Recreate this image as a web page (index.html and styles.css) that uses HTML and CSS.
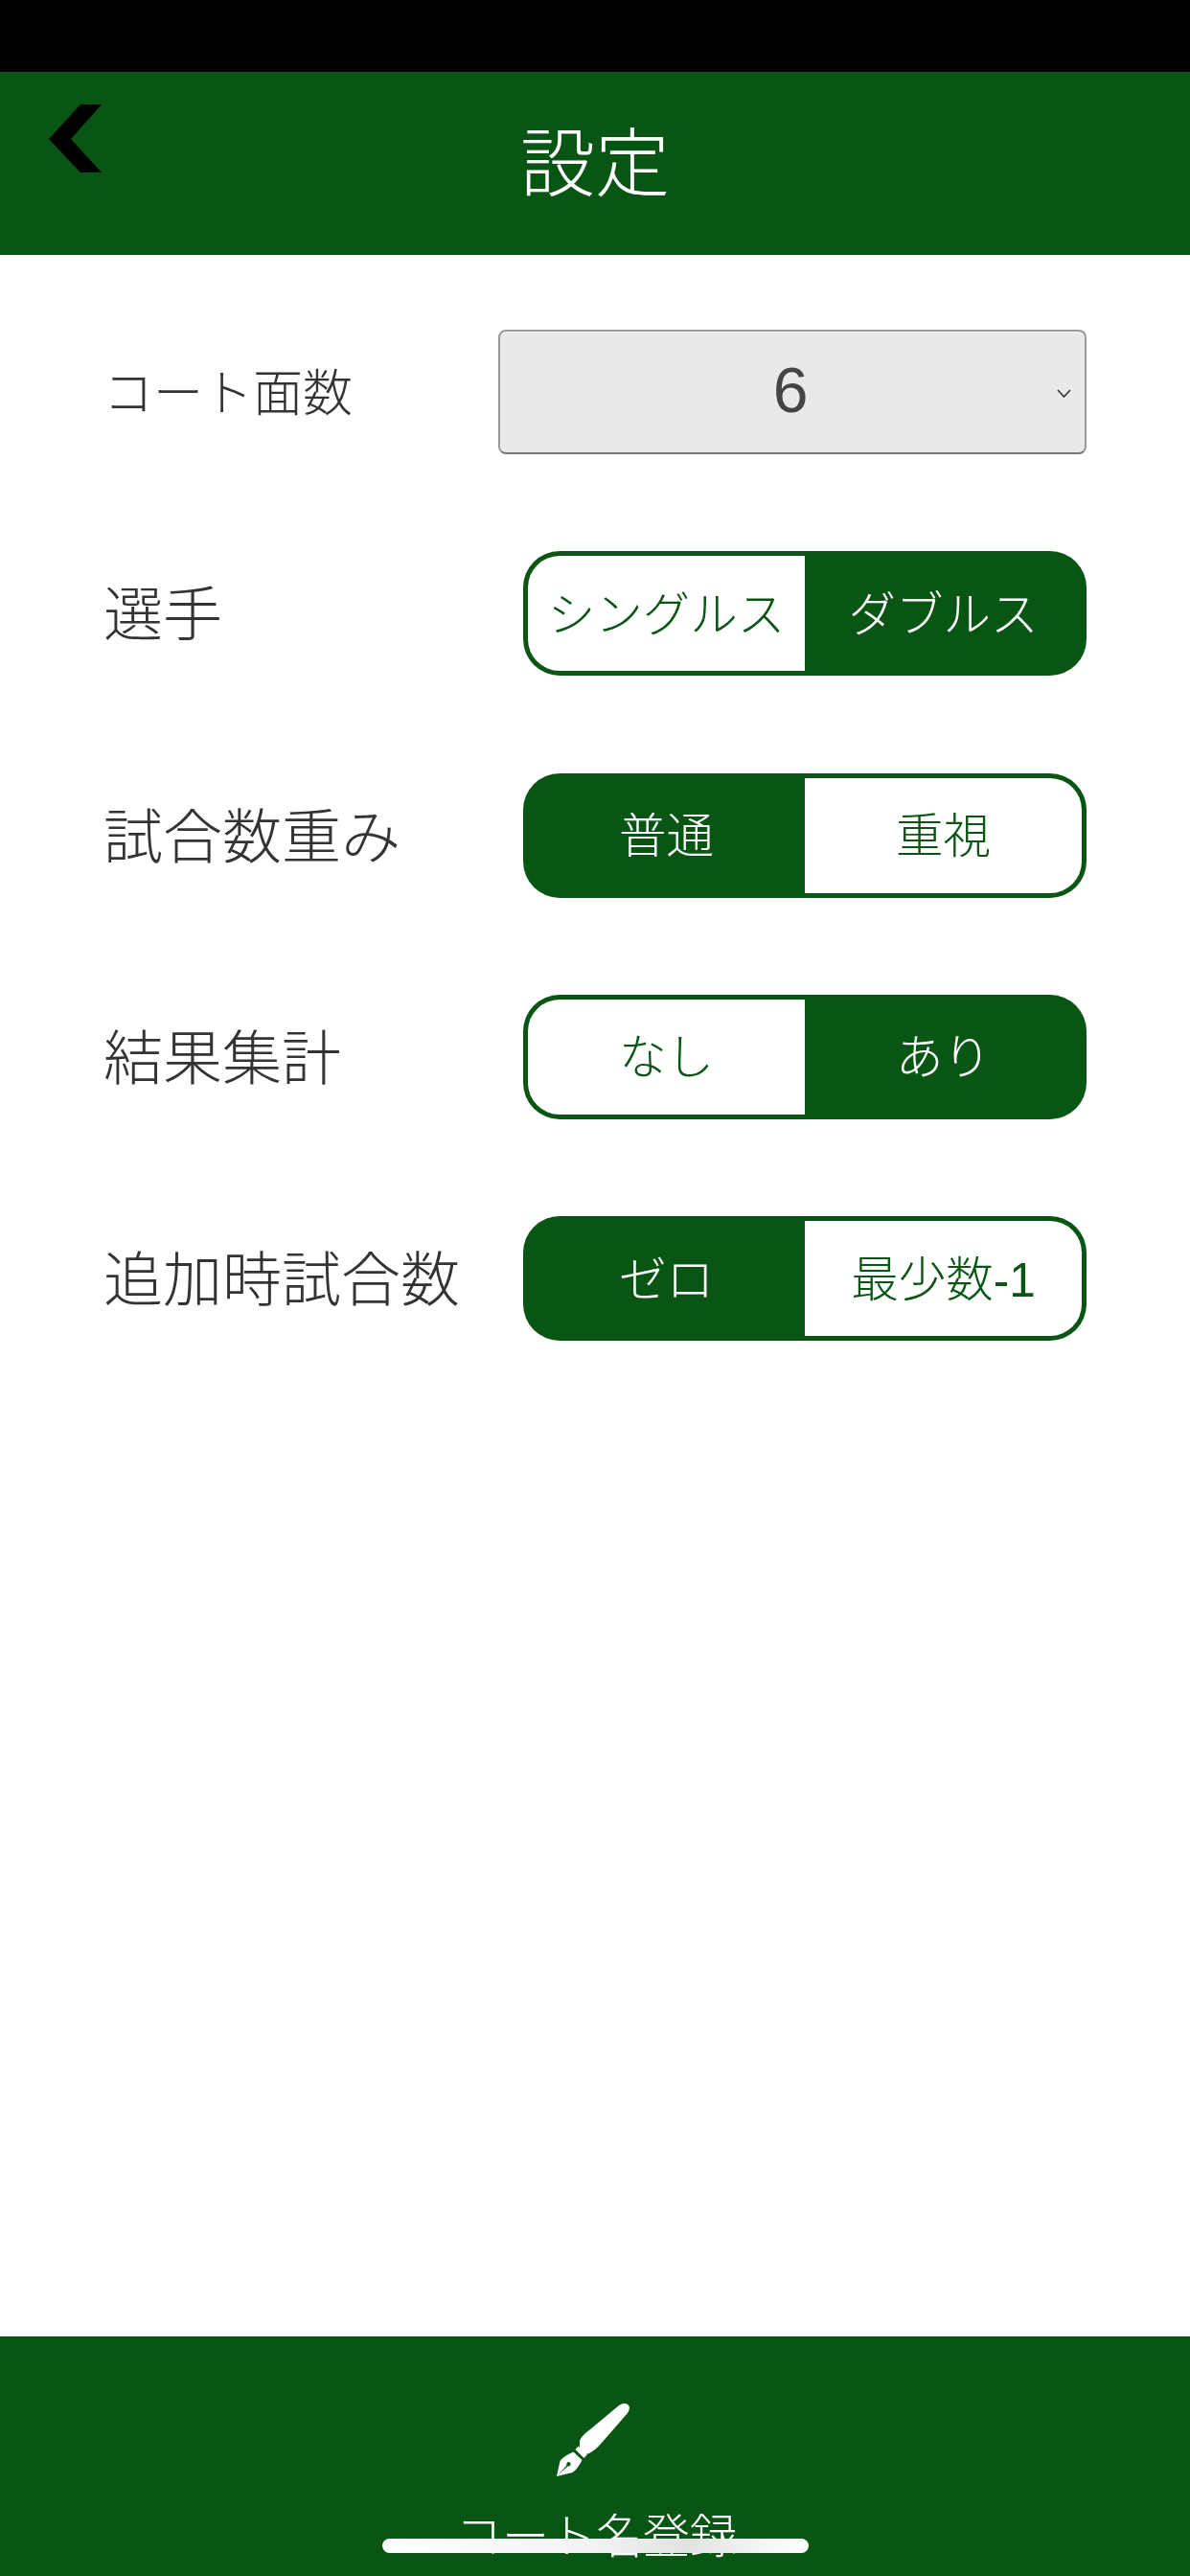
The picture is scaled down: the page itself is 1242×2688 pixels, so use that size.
FILE: index.html
```html
<!DOCTYPE html>
<html lang="ja">
<head>
  <meta charset="UTF-8">
  <meta name="viewport" content="width=device-width, initial-scale=1.0">
  <title>設定</title>
  <link rel="stylesheet" href="styles.css">
</head>
<body>
  <div class="status-bar"></div>

  <!-- Header -->
  <header class="header">
    <a class="back">
      <svg width="55" height="71" viewBox="0 0 55 71"><polygon points="55,0 33,0 0,36 33,71 55,71 23,36" fill="#000"/></svg>
    </a>
    <h1 class="title">設定</h1>
  </header>

  <!-- Settings -->
  <main class="settings">
    <div class="row">
      <span class="label label-small">コート面数</span>
      <div class="select">
        <span class="select-value">6</span>
        <svg class="select-arrow" width="15" height="9" viewBox="0 0 15 9"><polyline points="1,1 7.5,8 14,1" fill="none" stroke="#333" stroke-width="1.6"/></svg>
      </div>
    </div>

    <div class="row">
      <span class="label">選手</span>
      <div class="toggle">
        <span class="seg">シングルス</span>
        <span class="seg active">ダブルス</span>
      </div>
    </div>

    <div class="row">
      <span class="label">試合数重み</span>
      <div class="toggle">
        <span class="seg active">普通</span>
        <span class="seg">重視</span>
      </div>
    </div>

    <div class="row">
      <span class="label">結果集計</span>
      <div class="toggle">
        <span class="seg">なし</span>
        <span class="seg active">あり</span>
      </div>
    </div>

    <div class="row">
      <span class="label">追加時試合数</span>
      <div class="toggle">
        <span class="seg active">ゼロ</span>
        <span class="seg">最少数-1</span>
      </div>
    </div>
  </main>

  <!-- Footer -->
  <footer class="footer">
    <svg class="pen" width="76" height="76" viewBox="0 0 76 76" fill="#fff">
      <path d="M24 39 C26 34 30 31 35 27 L65 2 C68 0 71 -1 74 1 C77 3 76 7 74 10 L47 41 C43 46 38 50 33 52.5 C30 53 25 49 24 46 Z"/>
      <polygon points="19.5,48 22.5,44.5 32,53 28.5,57"/>
      <path fill-rule="evenodd" d="M17.5 50.5 L26.5 59 C24 64 21 69 16.5 72 L0 76 L3.5 60 C6 56 12 53 17.5 50.5 Z M1.5 74.5 L11.5 65.5 C13.5 66 15 64.5 14.5 62.5 C13.5 60.5 11.5 60.5 10.5 62.5 C10 63.5 10 64 10.5 64.5 Z"/>
    </svg>
    <span class="footer-label">コート名登録</span>
    <div class="home-bar"></div>
  </footer>
</body>
</html>
```

FILE: styles.css
```css
* {
  box-sizing: border-box;
}

html, body {
  margin: 0;
  padding: 0;
}

body {
  display: flex;
  flex-direction: column;
  height: 2688px;
  overflow: hidden;
  background-color: #fff;
  font-family: "Liberation Sans", "Noto Sans CJK JP", sans-serif;
  color: #333;
}

.status-bar {
  height: 75px;
  background-color: #000;
}

/* Header */
.header {
  display: grid;
  grid-template-columns: 1fr auto 1fr;
  align-items: center;
  height: 191px;
  background-color: #085514;
}

.back {
  justify-self: start;
  align-self: start;
  padding: 34px 0 0 51px;
}

.back svg {
  display: block;
}

.title {
  margin: 0;
  padding-bottom: 12px;
  font-size: 78px;
  font-weight: 300;
  color: #fff;
}

/* Settings */
.settings {
  flex: 1;
  display: flex;
  flex-direction: column;
  gap: 101.25px;
  padding: 78px 108px 0;
}

.row {
  display: flex;
  align-items: center;
  justify-content: space-between;
  height: 130px;
}

.label {
  padding-bottom: 6px;
  font-size: 62px;
  font-weight: 300;
  white-space: nowrap;
}

.label-small {
  font-size: 52px;
}

.select {
  position: relative;
  display: flex;
  align-items: center;
  justify-content: center;
  width: 614px;
  height: 130px;
  padding-right: 4px;
  padding-bottom: 4px;
  background-color: #e9e9e9;
  border: 2px solid #999;
  border-bottom-color: #777;
  border-radius: 8px;
  box-shadow: inset 0 1px 0 #f6f6f6;
}

.select-value {
  font-size: 66px;
  color: #444;
}

.select-arrow {
  position: absolute;
  top: 60px;
  right: 14px;
}

.toggle {
  display: flex;
  width: 588px;
  height: 130px;
}

.seg {
  flex: 1;
  display: flex;
  align-items: center;
  justify-content: center;
  padding-bottom: 6px;
  font-size: 49.5px;
  font-weight: 300;
  white-space: nowrap;
  color: #085514;
  background-color: #fff;
  border: 5px solid #085514;
}

.seg:first-child {
  border-right: none;
  border-radius: 38px 0 0 38px;
}

.seg:last-child {
  border-left: none;
  border-radius: 0 38px 38px 0;
}

.seg.active {
  color: #fff;
  background-color: #085514;
}

/* Footer */
.footer {
  position: relative;
  display: flex;
  flex-direction: column;
  align-items: center;
  height: 250px;
  padding-top: 70px;
  overflow: hidden;
  background-color: #085514;
}

.pen {
  display: block;
  margin-right: 4px;
}

.footer-label {
  margin-top: 35px;
  margin-left: 2px;
  font-size: 49px;
  font-weight: 300;
  line-height: 56px;
  color: #fff;
}

.home-bar {
  position: absolute;
  left: 399px;
  top: 211px;
  width: 445px;
  height: 15px;
  border-radius: 8px;
  background: linear-gradient(to right, #fff 0%, #f7f7f7 30%, #f2f2f2 50%, #e2e2e2 72%, #f4f4f4 88%, #fff 100%);
}
```
